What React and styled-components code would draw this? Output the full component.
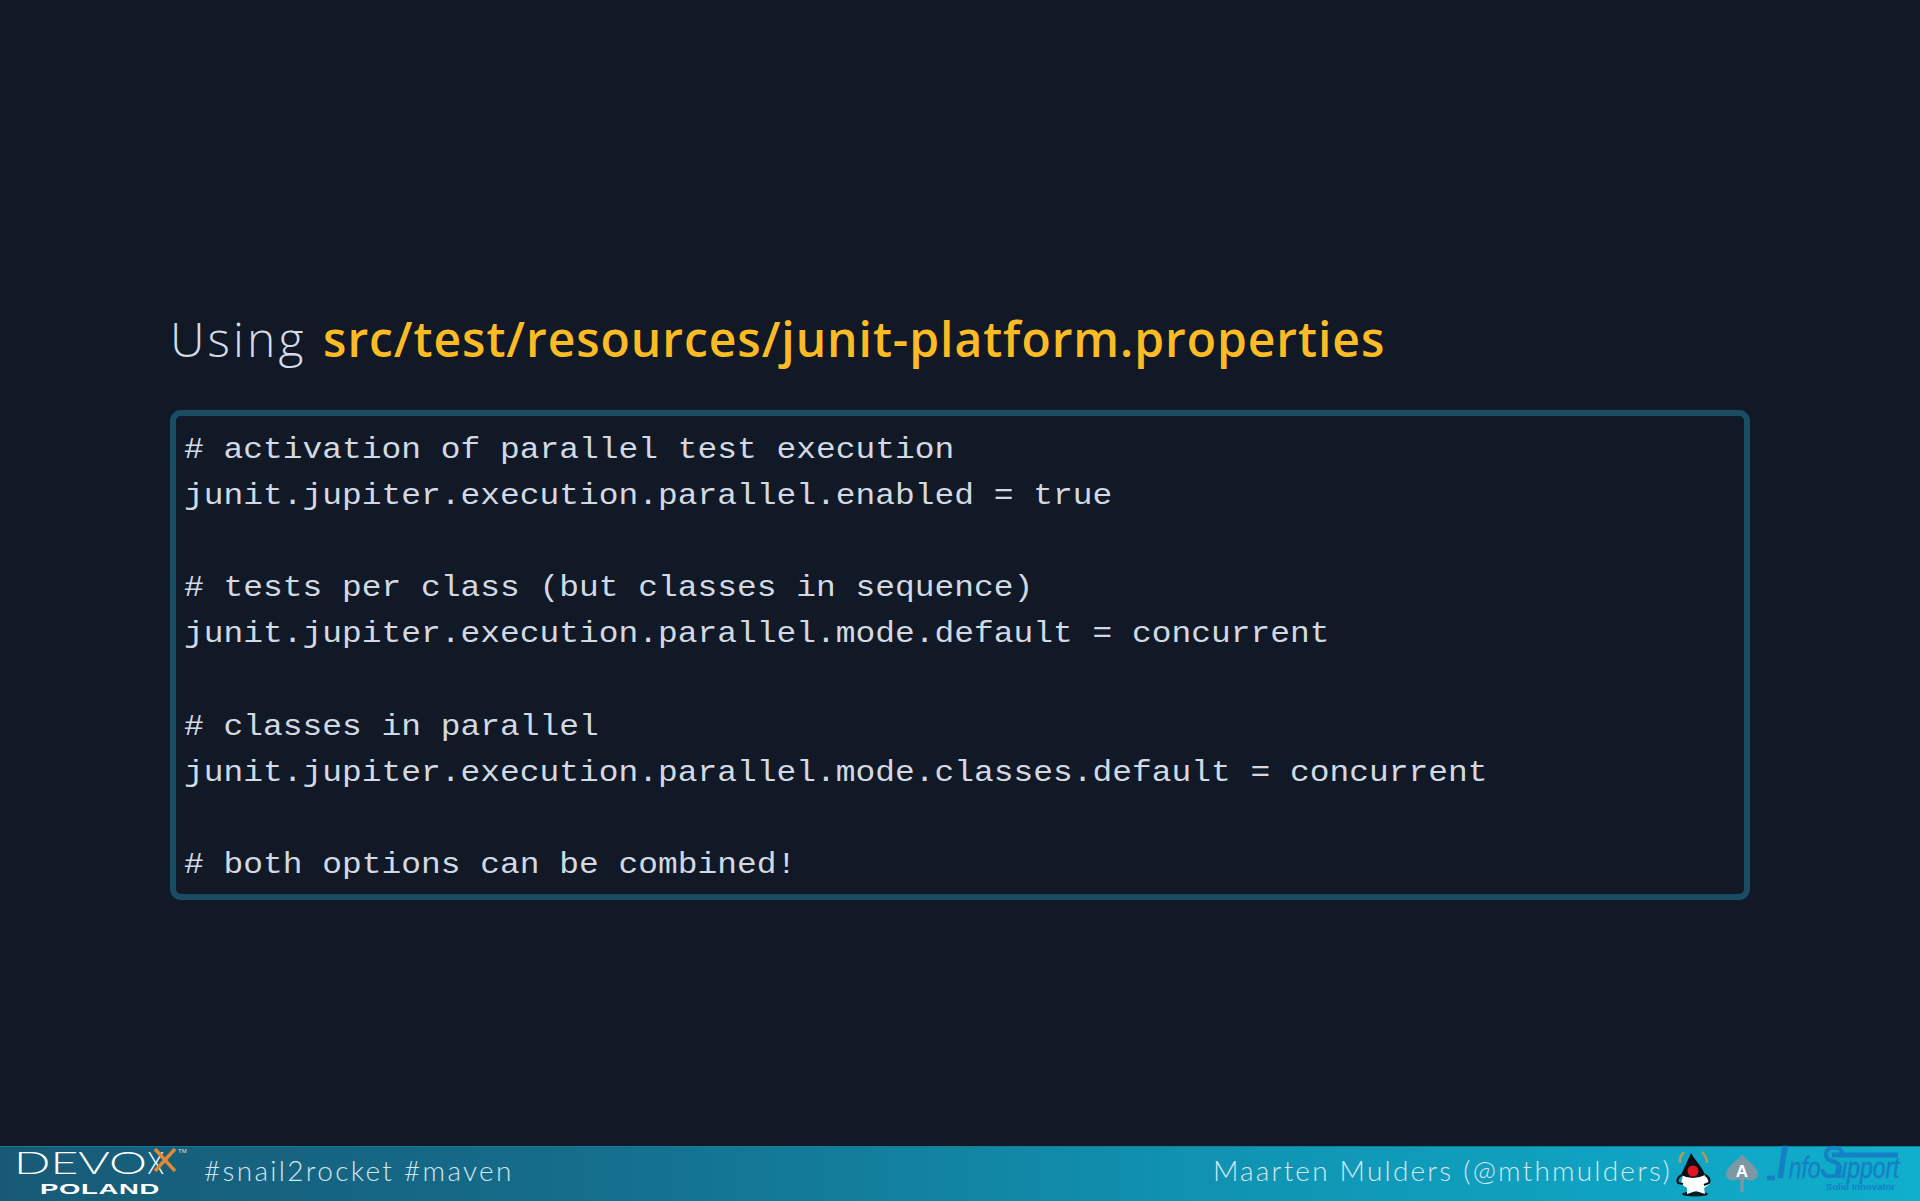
import React from "react";
import styled, { createGlobalStyle } from "styled-components";

const Global = createGlobalStyle`
  html, body { margin: 0; padding: 0; background: #111927; }
`;

const Slide = styled.div`
  width: 1920px;
  height: 1201px;
  display: flex;
  flex-direction: column;
  background: #111927;
  overflow: hidden;
`;

const Content = styled.main`
  flex: 1;
  padding: 306px 170px 0 170px;
`;

const Title = styled.h1`
  margin: 0 0 39px 0;
  height: 65px;
  line-height: 65px;
  font-family: "Open Sans", sans-serif;
  font-size: 48px;
  font-weight: 300;
  letter-spacing: 3.1px;
  color: #d5dbe6;
  white-space: nowrap;
`;

const FileName = styled.span`
  margin-left: 1px;
  font-weight: 600;
  letter-spacing: 0.95px;
  color: #fbbb25;
`;

const CodeBox = styled.pre`
  margin: 0;
  box-sizing: border-box;
  width: 1580px;
  height: 490px;
  padding: 11px 0 0 8px;
  border: 6px solid #1a4c64;
  border-radius: 11px;
  font-family: "Liberation Mono", monospace;
  font-size: 30px;
  line-height: 46.1px;
  color: #d3d9e3;
`;

const CodeText = styled.code`
  display: block;
  font: inherit;
  transform: scaleX(1.097);
  transform-origin: left center;
`;

const Footer = styled.footer`
  height: 55px;
  flex: none;
  display: flex;
  align-items: center;
  background: linear-gradient(90deg, #185a76 0%, #146d8b 30%, #1092b1 62%, #0fafcd 100%);
  border-top: 1px solid #137c98;
  box-sizing: border-box;
  padding-bottom: 8px;
`;

const Logo = styled.div`
  width: 187px;
  margin-left: 17px;
  height: 47px;
  position: relative;
  flex: none;
`;

const LogoTop = styled.div`
  position: absolute;
  left: -3px;
  top: -3px;
  font-family: "Lato", sans-serif;
  font-weight: 300;
  font-size: 32px;
  line-height: 36px;
  color: #fff;
  white-space: nowrap;
  transform: scaleX(1.5);
  transform-origin: left center;
`;

const LogoLastX = styled.span`
  display: inline-block;
  transform: scaleX(0.55);
  transform-origin: left center;
`;

const LogoBottom = styled.div`
  position: absolute;
  left: 23px;
  top: 33px;
  font-family: "Liberation Sans", sans-serif;
  font-weight: 700;
  font-size: 15.5px;
  line-height: 18px;
  letter-spacing: 0.4px;
  color: #fff;
  transform: scaleX(1.77);
  transform-origin: left center;
`;

const LogoCross = styled.svg`
  position: absolute;
  left: 136px;
  top: 1px;
`;

const Tm = styled.span`
  position: absolute;
  left: 161px;
  top: 0;
  font-family: "Liberation Sans", sans-serif;
  font-size: 6px;
  line-height: 8px;
  color: #d7e4ea;
`;

const Label = styled.span`
  font-family: "Lato", sans-serif;
  font-size: 28px;
  font-weight: 300;
  letter-spacing: ${(p) => p.$spacing}px;
  color: #d4e6ee;
  white-space: nowrap;
`;

const Spacer = styled.div`
  flex: 1;
`;

const Badges = styled.div`
  display: flex;
  align-items: center;
  margin-left: 3px;
  margin-right: 18px;
  gap: 8px;
  transform: translateY(3px);
`;

const DukeIcon = styled.svg`
  margin-right: 4px;
`;

const InfoLogo = styled.div`
  position: relative;
  width: 135px;
  height: 50px;
`;

const InfoWord = styled.div`
  position: absolute;
  left: 10px;
  top: -3px;
  height: 34px;
  display: flex;
  align-items: baseline;
  font-family: "Liberation Sans", sans-serif;
  font-style: italic;
  font-size: 29px;
  line-height: 34px;
  color: #1580c4;
  white-space: nowrap;
  -webkit-text-stroke: 0.4px #1580c4;
  transform: scaleX(0.79);
  transform-origin: left center;
`;

const InfoCap = styled.span`
  font-size: 46px;
  font-weight: ${(p) => p.$weight};
  margin-right: ${(p) => p.$gap}px;
  margin-left: ${(p) => p.$lead}px;
`;

const InfoTag = styled.span`
  position: absolute;
  right: 7px;
  top: 34px;
  font-family: "Liberation Sans", sans-serif;
  font-weight: 700;
  font-size: 9.5px;
  line-height: 10px;
  color: #1580c4;
  white-space: nowrap;
`;

const InfoBar = styled.svg`
  position: absolute;
  left: 0;
  top: 0;
`;

const code = `# activation of parallel test execution
junit.jupiter.execution.parallel.enabled = true

# tests per class (but classes in sequence)
junit.jupiter.execution.parallel.mode.default = concurrent

# classes in parallel
junit.jupiter.execution.parallel.mode.classes.default = concurrent

# both options can be combined!`;

function Duke() {
  return (
    <DukeIcon width="38" height="50" viewBox="0 0 38 50">
      <path d="M5 15 Q4 9 9 4 M27 4 Q32 9 32 15" stroke="#b09a55" strokeWidth="2.5" fill="none" />
      <ellipse cx="20" cy="46" rx="13" ry="2.5" fill="#0a1a22" />
      <path d="M8 27 L30 27 L35 36 L29 40 L30 46 L21 43 L12 46 L12 40 L6 36 Z" fill="#fff" />
      <path d="M16 5 C20 12 28 20 30 27 Q18 33 6 27 C9 20 13 12 16 5 Z" fill="#0d0f14" />
      <path d="M7 27 Q1 30 3 35 L8 36 M30 27 Q36 30 34 35 L29 37" stroke="#0d0f14" strokeWidth="2" fill="none" />
      <circle cx="18" cy="23" r="5.5" fill="#e0161f" />
    </DukeIcon>
  );
}

function Spade() {
  return (
    <svg width="34" height="40" viewBox="0 0 34 40">
      <path
        d="M17 1 C21 7 33 14 33 21 C33 27 26 29 19 26 L18.5 39 L15.5 39 L15 26 C8 29 1 27 1 21 C1 14 13 7 17 1 Z"
        fill="#7c97a6"
      />
      <text x="17" y="24" textAnchor="middle" fontFamily="Liberation Sans" fontWeight="700" fontSize="17" fill="#fff">
        A
      </text>
    </svg>
  );
}

export default function App() {
  return (
    <Slide>
      <Global />
      <Content>
        <Title>
          Using <FileName>src/test/resources/junit-platform.properties</FileName>
        </Title>
        <CodeBox>
          <CodeText>{code}</CodeText>
        </CodeBox>
      </Content>
      <Footer>
        <Logo>
          <LogoTop>
            DEVO<LogoLastX>X</LogoLastX>
          </LogoTop>
          <LogoCross width="24" height="24" viewBox="0 0 24 24">
            <path d="M2 1 L22 23 M22 1 L2 23" stroke="#e08a32" strokeWidth="3.5" />
          </LogoCross>
          <Tm>TM</Tm>
          <LogoBottom>POLAND</LogoBottom>
        </Logo>
        <Label $spacing={2.3}>#snail2rocket #maven</Label>
        <Spacer />
        <Label $spacing={2.2}>Maarten Mulders (@mthmulders)</Label>
        <Badges>
          <Duke />
          <Spade />
          <InfoLogo>
            <InfoBar width="135" height="40" viewBox="0 0 135 40">
              <path d="M0 30 H8" stroke="#1580c4" strokeWidth="5" />
              <path d="M65 7 H131" stroke="#1580c4" strokeWidth="5" />
            </InfoBar>
            <InfoWord>
              <InfoCap $weight={700} $gap={2} $lead={0}>I</InfoCap>
              nfo
              <InfoCap $weight={400} $gap={-12} $lead={-1}>S</InfoCap>
              upport
            </InfoWord>
            <InfoTag>Solid Innovator</InfoTag>
          </InfoLogo>
        </Badges>
      </Footer>
    </Slide>
  );
}
